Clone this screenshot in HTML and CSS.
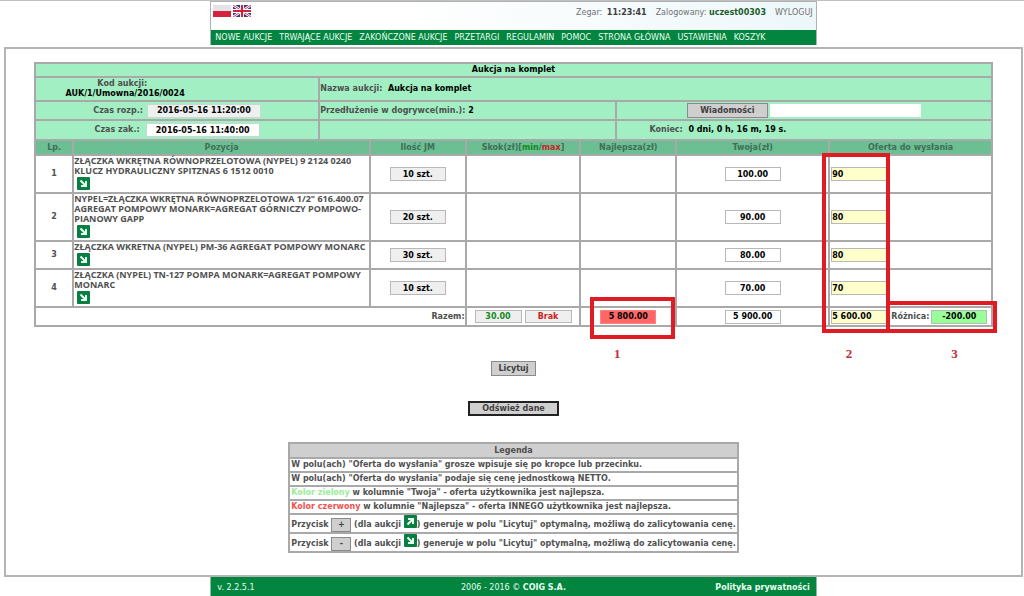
FILE: index.html
```html
<!DOCTYPE html>
<html lang="pl">
<head>
<meta charset="utf-8">
<title>Aukcja na komplet</title>
<link rel="stylesheet" href="styles.css">
</head>
<body>
<svg class="defs" aria-hidden="true">
  <symbol id="arrow-down" viewBox="0 0 13 13">
    <rect width="13" height="13" rx="1" fill="#0a7d43"/>
    <path d="M3.5 3.5 L8.5 8.5 M9 4 V9 H4" fill="none" stroke="#e6fff0" stroke-width="2"/>
  </symbol>
  <symbol id="arrow-up" viewBox="0 0 13 13">
    <rect width="13" height="13" rx="1" fill="#0a7d43"/>
    <path d="M3.5 9.5 L8.5 4.5 M4 4 H9 V9" fill="none" stroke="#e6fff0" stroke-width="2"/>
  </symbol>
</svg>
<header class="top">
  <div class="top-bar">
    <div class="flags">
      <a href="#" aria-label="Polski"><svg class="flag" viewBox="0 0 18 12"><rect width="18" height="12" fill="#e4e4e8"/><rect y="6" width="18" height="6" fill="#d4213d"/></svg></a>
      <a href="#" aria-label="English"><svg class="flag" viewBox="0 0 18 12"><rect width="18" height="12" fill="#2f3f86"/><path d="M0 0 L18 12 M18 0 L0 12" stroke="#fff" stroke-width="2.6"/><path d="M0 0 L18 12 M18 0 L0 12" stroke="#d0405a" stroke-width="1"/><path d="M9 0 V12 M0 6 H18" stroke="#fff" stroke-width="4"/><path d="M9 0 V12 M0 6 H18" stroke="#cc2440" stroke-width="2.2"/></svg></a>
    </div>
    <div class="session">
      <span>Zegar: <b class="clock">11:23:41</b></span>
      <span>Zalogowany: <b class="user">uczest00303</b></span>
      <a href="#">WYLOGUJ</a>
    </div>
  </div>
  <nav class="menu">
    <a href="#">NOWE AUKCJE</a><a href="#">TRWAJĄCE AUKCJE</a><a href="#">ZAKOŃCZONE AUKCJE</a><a href="#">PRZETARGI</a><a href="#">REGULAMIN</a><a href="#">POMOC</a><a href="#">STRONA GŁÓWNA</a><a href="#">USTAWIENIA</a><a href="#">KOSZYK</a>
  </nav>
</header>
<main class="frame">
  <section class="auction">
    <table class="info">
      <colgroup><col class="i-code"><col class="i-name"><col class="i-end"></colgroup>
      <tr class="title-row"><th colspan="3">Aukcja na komplet</th></tr>
      <tr class="name-row">
        <td class="code">Kod aukcji: &nbsp;<br><b>AUK/1/Umowna/2016/0024</b></td>
        <td class="left" colspan="2">Nazwa aukcji: &nbsp;<b>Aukcja na komplet</b></td>
      </tr>
      <tr>
        <td><div class="line"><label for="start">Czas rozp.:</label><input class="field date muted" id="start" value="2016-05-16 11:20:00" readonly></div></td>
        <td class="left">Przedłużenie w dogrywce(min.): <b>2</b></td>
        <td><div class="line messages"><button class="btn wide" type="button">Wiadomości</button><input class="message" aria-label="Wiadomość"></div></td>
      </tr>
      <tr>
        <td><div class="line end"><label for="end">Czas zak.:</label><input class="field date" id="end" value="2016-05-16 11:40:00" readonly></div></td>
        <td></td>
        <td class="remaining">Koniec: &nbsp;<b>0 dni, 0 h, 16 m, 19 s.</b></td>
      </tr>
    </table>
    <table class="items">
      <colgroup><col class="c-no"><col class="c-item"><col class="c-qty"><col class="c-step"><col class="c-best"><col class="c-own"><col class="c-offer"></colgroup>
      <thead>
        <tr><th>Lp.</th><th>Pozycja</th><th>Ilość JM</th><th>Skok(zł)[<span class="min">min</span>/<span class="max">max</span>]</th><th>Najlepsza(zł)</th><th>Twoja(zł)</th><th>Oferta do wysłania</th></tr>
      </thead>
      <tbody>
        <tr>
          <td>1</td>
          <td class="item">ZŁĄCZKA WKRĘTNA RÓWNOPRZELOTOWA (NYPEL) 9 2124 0240 KLUCZ HYDRAULICZNY SPITZNAS 6 1512 0010<svg class="icon"><use href="#arrow-down"/></svg></td>
          <td><input class="field muted" aria-label="Ilość 1" value="10 szt." readonly></td><td></td><td></td>
          <td><input class="field" aria-label="Twoja 1" value="100.00" readonly></td>
          <td class="offer"><input class="field bid" aria-label="Oferta 1" value="90"></td>
        </tr>
        <tr>
          <td>2</td>
          <td class="item">NYPEL=ZŁĄCZKA WKRĘTNA RÓWNOPRZELOTOWA 1/2" 616.400.07 AGREGAT POMPOWY MONARK=AGREGAT GÓRNICZY POMPOWO-PIANOWY GAPP<svg class="icon"><use href="#arrow-down"/></svg></td>
          <td><input class="field muted" aria-label="Ilość 2" value="20 szt." readonly></td><td></td><td></td>
          <td><input class="field" aria-label="Twoja 2" value="90.00" readonly></td>
          <td class="offer"><input class="field bid" aria-label="Oferta 2" value="80"></td>
        </tr>
        <tr>
          <td>3</td>
          <td class="item">ZŁĄCZKA WKRETNA (NYPEL) PM-36 AGREGAT POMPOWY MONARC<svg class="icon"><use href="#arrow-down"/></svg></td>
          <td><input class="field muted" aria-label="Ilość 3" value="30 szt." readonly></td><td></td><td></td>
          <td><input class="field" aria-label="Twoja 3" value="80.00" readonly></td>
          <td class="offer"><input class="field bid" aria-label="Oferta 3" value="80"></td>
        </tr>
        <tr>
          <td>4</td>
          <td class="item">ZŁĄCZKA (NYPEL) TN-127 POMPA MONARK=AGREGAT POMPOWY MONARC<svg class="icon"><use href="#arrow-down"/></svg></td>
          <td><input class="field muted" aria-label="Ilość 4" value="10 szt." readonly></td><td></td><td></td>
          <td><input class="field" aria-label="Twoja 4" value="70.00" readonly></td>
          <td class="offer"><input class="field bid" aria-label="Oferta 4" value="70"></td>
        </tr>
      </tbody>
      <tfoot>
        <tr>
          <td class="sum" colspan="3">Razem:</td>
          <td><div class="pair"><input class="field muted min" aria-label="Skok min" value="30.00" readonly><input class="field muted max" aria-label="Skok max" value="Brak" readonly></div></td>
          <td><input class="field best" aria-label="Najlepsza razem" value="5 800.00" readonly></td>
          <td><input class="field" aria-label="Twoja razem" value="5 900.00" readonly></td>
          <td class="offer"><div class="total"><input class="field bid" aria-label="Oferta razem" value="5 600.00" readonly><label for="diff">Różnica:</label><input class="field diff" id="diff" value="-200.00" readonly></div></td>
        </tr>
      </tfoot>
    </table>
    <div class="mark mark-best"><span>1</span></div>
    <div class="mark mark-offer"><span>2</span></div>
    <div class="mark mark-diff"><span>3</span></div>
  </section>
  <div class="actions">
    <button class="btn" type="button">Licytuj</button>
    <button class="btn wide primary" type="button">Odśwież dane</button>
  </div>
  <table class="legend">
    <thead><tr><th>Legenda</th></tr></thead>
    <tbody>
      <tr><td>W polu(ach) "Oferta do wysłania" grosze wpisuje się po kropce lub przecinku.</td></tr>
      <tr><td>W polu(ach) "Oferta do wysłania" podaje się cenę jednostkową NETTO.</td></tr>
      <tr><td><span class="green">Kolor zielony</span> w kolumnie "Twoja" - oferta użytkownika jest najlepsza.</td></tr>
      <tr><td><span class="red">Kolor czerwony</span> w kolumnie "Najlepsza" - oferta INNEGO użytkownika jest najlepsza.</td></tr>
      <tr class="tall"><td>Przycisk <button class="btn sign" type="button">+</button> (dla aukcji <svg class="icon inline"><use href="#arrow-up"/></svg>) generuje w polu "Licytuj" optymalną, możliwą do zalicytowania cenę.</td></tr>
      <tr class="tall"><td>Przycisk <button class="btn sign" type="button">-</button> (dla aukcji <svg class="icon inline"><use href="#arrow-down"/></svg>) generuje w polu "Licytuj" optymalną, możliwą do zalicytowania cenę.</td></tr>
    </tbody>
  </table>
</main>
<footer class="bottom">
  <span>v. 2.2.5.1</span>
  <span>2006 - 2016 © <b>COIG S.A.</b></span>
  <a href="#"><b>Polityka prywatności</b></a>
</footer>
</body>
</html>
```
FILE: styles.css
```css
* { box-sizing: border-box; }
html { border-top: 1px solid #c0c0c0; }
body {
  margin: 0 1px 0 4px;
  background: #fff;
  color: #505050;
  font: 8px/10px "DejaVu Sans", Verdana, sans-serif;
}
a { color: inherit; text-decoration: none; }
input, button { font: inherit; font-weight: bold; margin: 0; }
.defs { display: none; }

.top {
  width: 59.5%;
  margin: 0 auto;
  border: solid #b0b0b0;
  border-width: 1px 1px 0;
}
.top-bar {
  display: flex;
  justify-content: space-between;
  height: 28px;
  padding: 3px 3px 0 2px;
  background: linear-gradient(90deg, #fff 30%, #edf7fa);
}
.flags { display: flex; gap: 2px; }
.flag { display: block; width: 18px; height: 12px; }
.session { display: flex; gap: 9px; padding-top: 3px; color: #707070; }
.clock { margin-left: 2px; color: #404040; }
.user { color: #1d5c2a; }
.menu {
  display: flex;
  gap: 7px;
  padding: 3px 4px 2px;
  background: #03843f;
  color: #e8fff0;
  white-space: nowrap;
}

.frame {
  margin-top: 2px;
  padding: 13px 28px 22px;
  border: 2px solid #b4b4b4;
}
.auction { position: relative; }
table { border-collapse: collapse; }
th, td { padding: 0; border: 2px solid #a9a9a9; text-align: center; }
.info, .items { width: 100%; table-layout: fixed; font-weight: bold; }
.info { background: #a2efc3; }
.info tr { height: 19px; }
.info tr:last-child td { border-bottom: 0; }
.info .title-row { height: 14px; }
.info .name-row { height: 24px; }
.info b, .title-row { color: #000; }
.i-code { width: 29.7%; }
.i-name { width: 31%; }
.info .left { text-align: left; }
.info .code { padding-right: 104px; }
.info .remaining { padding-right: 172px; }
.line { display: flex; justify-content: center; align-items: center; gap: 4px; }
.line.end { gap: 6px; }
.line.messages { gap: 2px; }
.message { width: 151px; height: 13px; padding: 0 2px; border: 0; background: #fff; }

.field {
  display: block;
  width: 56px;
  height: 14px;
  margin: 0 auto;
  padding: 0;
  border: 1px solid #b8b8b8;
  background: #fff;
  color: #000;
  text-align: center;
}
.line .field, .pair .field, .total .field { margin: 0; }
.date { width: 114px; border-color: #c4dccf; }
.muted { background: #efefef; }
.bid { margin: 0; background: #ffffcc; text-align: left; }
.best { background: #ff6666; border-color: #ff8080; }
.diff { background: #99ff99; }

.c-no { width: 4%; }
.c-item { width: 31%; }
.c-qty { width: 10%; }
.c-step { width: 12%; }
.c-best { width: 10%; }
.c-own { width: 16%; }
.items thead tr { height: 15px; background: #6bbf93; color: #3f6f57; }
.items .min { color: #128a1c; }
.items .max { color: #cc1f24; }
.items .item {
  text-align: left;
  vertical-align: top;
  font-family: "Open Sans", sans-serif;
  font-size: 9px;
}
.items .offer { text-align: left; padding-left: 1px; }
.items .sum { text-align: right; }
.items tfoot tr { height: 19px; }
.icon { display: block; width: 13px; height: 13px; margin: 1px 0 2px 3px; }
.icon.inline { display: inline-block; margin: 0; vertical-align: -1px; }
.pair { display: flex; justify-content: center; gap: 3px; }
.pair .field { width: 47px; height: 13px; }
.total { display: flex; align-items: center; gap: 4px; }
.total .diff { margin-left: -2px; }

.mark { position: absolute; border: 4px solid #e01b24; }
.mark span {
  position: absolute;
  left: 0;
  right: 0;
  top: 100%;
  padding-top: 18px;
  color: #c8283c;
  font: bold 13px/14px "Liberation Serif", serif;
  text-align: center;
}
.mark-best { left: 58%; width: 85px; height: 42px; bottom: -12px; }
.mark-best span { padding-top: 12px; right: 31px; }
.mark-offer { right: 103px; width: 68px; top: 91px; bottom: -6px; }
.mark-offer span { right: 14px; }
.mark-diff { right: -4px; width: 111px; height: 32px; bottom: -6px; }
.mark-diff span { left: 26px; }

.actions {
  display: flex;
  flex-direction: column;
  align-items: center;
  gap: 25px;
  padding: 34px 0 26px;
}
.btn {
  height: 15px;
  padding: 0 6px;
  border: 1px solid #8a8a8a;
  border-radius: 0;
  background: #cfcfcf;
  color: #404040;
}
.btn.wide { padding: 0 12px; }
.btn.primary { border: 2px solid #222; }
.btn.sign { width: 20px; height: 14px; padding: 0; }

.legend { margin: 0 auto; font-weight: bold; }
.legend td { height: 14px; text-align: left; padding: 0 1px; white-space: nowrap; }
.legend th { height: 15px; background: #cfcfcf; }
.legend .tall td { height: 19px; }
.legend .green { color: #99ee99; }
.legend .red { color: #f05050; }

.bottom {
  display: flex;
  width: 59.5%;
  margin: 0 auto;
  padding: 6px;
  border: 1px solid #8abf9f;
  border-width: 0 1px;
  background: #03843f;
  color: #e8fff0;
}
.bottom > * { flex: 1; text-align: center; }
.bottom > :first-child { text-align: left; }
.bottom > :last-child { text-align: right; }
```
